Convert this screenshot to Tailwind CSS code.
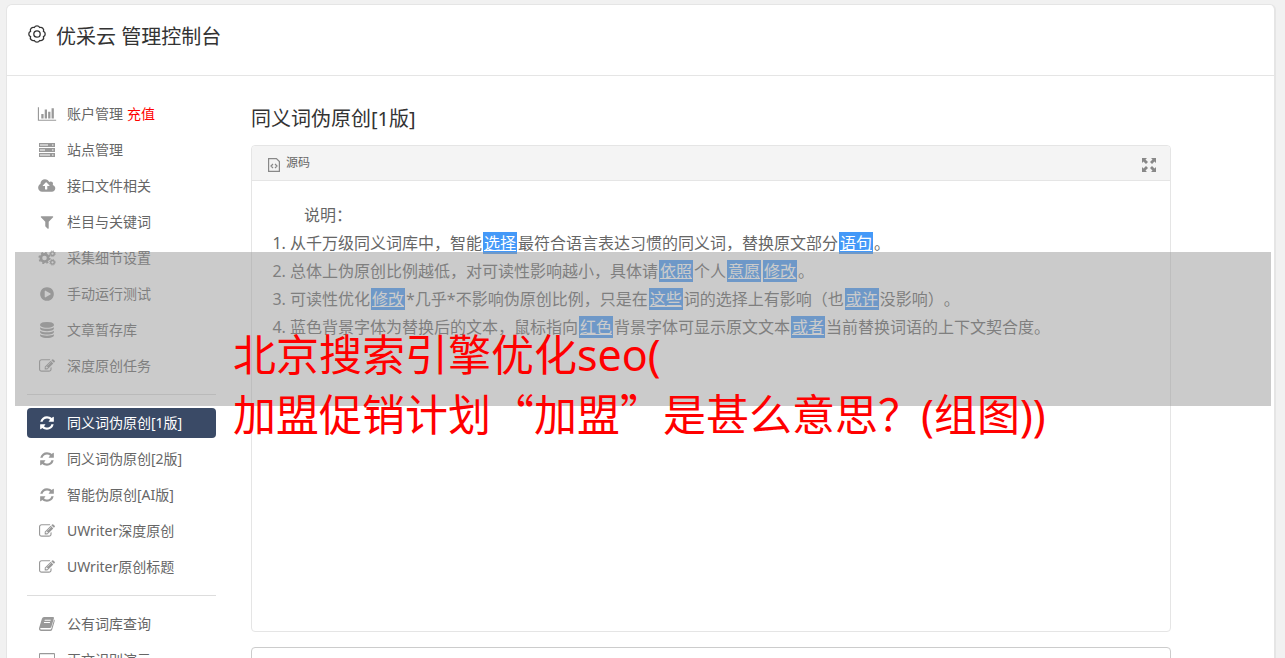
<!DOCTYPE html>
<html lang="zh-CN">
<head>
  <meta charset="UTF-8" />
  <meta name="viewport" content="width=device-width, initial-scale=1.0" />
  <title>优采云 管理控制台</title>
  <script src="https://cdn.jsdelivr.net/npm/@tailwindcss/browser@4"></script>
</head>
<body class="relative bg-[#f1f1f1] pt-1 pr-[9px] pl-[6px] font-['Noto_Sans','Noto_Sans_CJK_SC',sans-serif] text-[#666] [text-spacing-trim:space-all]">

  <!-- icon set -->
  <svg class="hidden">
    <symbol id="i-chart" viewBox="0 0 2048 1792"><path d="M640 896v512h-256v-512h256zm384-512v1024h-256v-1024h256zm1024 1152v128h-2048v-1536h128v1408h1920zm-640-896v768h-256v-768h256zm384-384v1152h-256v-1152h256z"/></symbol>
    <symbol id="i-server" viewBox="0 0 18 16"><path fill-rule="evenodd" d="M1 1h16v4H1zM2 2.500h8v1H2zM14 2.500h1.500v1H14zM1 6h16v4H1zM2 7.500h5v1H2zM14 7.500h1.500v1H14zM1 11h16v4H1zM2 12.500h10v1H2zM14 12.500h1.500v1H14z"/></symbol>
    <symbol id="i-upload" viewBox="0 0 1920 1792"><path d="M1216 864q0-14-9-23l-352-352q-9-9-23-9t-23 9l-351 351q-10 12-10 24 0 14 9 23t23 9h224v352q0 13 9.500 22.500t22.500 9.500h192q13 0 22.500-9.500t9.500-22.500v-352h224q13 0 22.500-9.500t9.500-22.500zm640 288q0 159-112.500 271.500t-271.500 112.500h-1088q-185 0-316.500-131.500t-131.500-316.500q0-130 70-240t188-165q-2-30-2-43 0-212 150-362t362-150q156 0 285.500 87t188.500 231q71-62 166-62 106 0 181 75t75 181q0 76-41 138 130 31 213.500 135.500t83.500 238.500z" transform="translate(32 0)"/></symbol>
    <symbol id="i-filter" viewBox="0 0 1792 1792"><path d="M1595 295q17 41-14 70l-493 493v742q0 42-39 59-13 5-25 5-27 0-45-19l-256-256q-19-19-19-45v-486l-493-493q-31-29-14-70 17-39 59-39h1280q42 0 59 39z"/></symbol>
    <symbol id="i-cogs" viewBox="0 0 18 16">
      <g fill="none" stroke="currentColor">
        <circle cx="6.500" cy="8" r="3.600" stroke-width="2.600"/>
        <circle cx="6.500" cy="8" r="5.300" stroke-width="1.600" stroke-dasharray="2.080 2.080"/>
        <circle cx="14.500" cy="3.700" r="1.800" stroke-width="1.400"/>
        <circle cx="14.500" cy="3.700" r="2.800" stroke-width="1" stroke-dasharray="1.100 1.100"/>
        <circle cx="14.500" cy="12.300" r="1.800" stroke-width="1.400"/>
        <circle cx="14.500" cy="12.300" r="2.800" stroke-width="1" stroke-dasharray="1.100 1.100"/>
      </g>
    </symbol>
    <symbol id="i-play" viewBox="0 0 1792 1792"><path d="M896 128q209 0 385.500 103t279.500 279.500 103 385.500-103 385.500-279.500 279.500-385.500 103-385.500-103-279.500-279.500-103-385.500 103-385.500 279.500-279.500 385.500-103zm384 823q32-18 32-55t-32-55l-544-320q-31-19-64-1-32 19-32 56v640q0 37 32 56 16 8 32 8 17 0 32-9z"/></symbol>
    <symbol id="i-database" viewBox="0 0 1792 1792"><path d="M896 768q237 0 443-43t325-127v170q0 69-103 128t-280 93.500-385 34.500-385-34.500-280-93.500-103-128v-170q119 84 325 127t443 43zm0 768q237 0 443-43t325-127v170q0 69-103 128t-280 93.500-385 34.500-385-34.500-280-93.500-103-128v-170q119 84 325 127t443 43zm0-384q237 0 443-43t325-127v170q0 69-103 128t-280 93.500-385 34.500-385-34.500-280-93.500-103-128v-170q119 84 325 127t443 43zm0-1152q208 0 385 34.500t280 93.500 103 128v128q0 69-103 128t-280 93.500-385 34.500-385-34.500-280-93.500-103-128v-128q0-69 103-128t280-93.500 385-34.500z"/></symbol>
    <symbol id="i-edit" viewBox="0 0 1792 1792"><path d="M888 1184l116-116-152-152-116 116v56h96v96h56zm440-720q-16-16-33 1l-350 350q-17 17-1 33t33-1l350-350q17-17 1-33zm80 594v190q0 119-84.500 203.500t-203.500 84.500h-832q-119 0-203.500-84.500t-84.500-203.500v-832q0-119 84.500-203.500t203.500-84.500h832q63 0 117 25 15 7 18 23 3 17-9 29l-49 49q-14 14-32 8-23-6-45-6h-832q-66 0-113 47t-47 113v832q0 66 47 113t113 47h832q66 0 113-47t47-113v-126q0-13 9-22l64-64q15-15 35-7t20 29zm-96-738l288 288-672 672h-288v-288zm444 132l-92 92-288-288 92-92q28-28 68-28t68 28l152 152q28 28 28 68t-28 68z"/></symbol>
    <symbol id="i-refresh" viewBox="0 0 1792 1792"><path d="M1639 1056q0 5-1 7-64 268-268 434.500t-478 166.500q-146 0-282.500-55t-243.500-157l-129 129q-19 19-45 19t-45-19-19-45v-448q0-26 19-45t45-19h448q26 0 45 19t19 45-19 45l-137 137q71 66 161 102t187 36q134 0 250-65t186-179q11-17 53-117 8-23 30-23h192q13 0 22.500 9.500t9.500 22.500zm25-800v448q0 26-19 45t-45 19h-448q-26 0-45-19t-19-45 19-45l138-138q-148-137-349-137-134 0-250 65t-186 179q-11 17-53 117-8 23-30 23h-199q-13 0-22.500-9.500t-9.500-22.500v-7q65-268 270-434.500t480-166.500q146 0 284 55.500t245 156.500l130-129q19-19 45-19t45 19 19 45z"/></symbol>
    <symbol id="i-book" viewBox="0 0 18 16"><path fill-rule="evenodd" d="M6 1h9q1.300 0 .9 1.400l-2.500 8.400q-.4 1.200-1.600 1.200H3q-.9 0-.9.700 0 .8 1.200.8h8.900q.9 0 1.200-.9l2.700-9q.9.500.6 1.500l-2.500 8.400q-.5 1.500-2 1.500H3.300Q.8 15 1 12.300L3.900 2.700Q4.500 1 6 1zM6.800 3.800l-.3.900h6l.3-.9zM6.100 6.100l-.3.900h6l.3-.9z"/></symbol>
    <symbol id="i-screen" viewBox="0 0 18 16"><path fill-rule="evenodd" d="M2 1h14q1 0 1 1v9q0 1-1 1h-5v2h2v1H5v-1h2v-2H2q-1 0-1-1V2q0-1 1-1zm0 1.300v7.500h14V2.300z"/></symbol>
  </svg>

  <div class="min-h-screen rounded-t-md border-t border-r-2 border-l border-[#e5e5e5] bg-white">
    <header class="flex h-[71px] items-start gap-[9px] border-b border-[#e5e5e5] pt-[15px] pl-5 text-[#333]">
      <svg class="mt-1 size-5" viewBox="0 0 20 20" fill="none" stroke="currentColor" stroke-width="1.300"><path d="M16.500 7.300a3 3 0 0 1 0 5.400a3 3 0 0 1-3.800 3.800a3 3 0 0 1-5.400 0a3 3 0 0 1-3.800-3.800a3 3 0 0 1 0-5.400a3 3 0 0 1 3.800-3.800a3 3 0 0 1 5.400 0a3 3 0 0 1 3.800 3.800z"/><circle cx="10" cy="10" r="3.200"/></svg>
      <h1 class="pt-px text-xl/[32px]">优采云 管理控制台</h1>
    </header>

    <div class="flex gap-[35px] pt-[23px] pr-[103px] pl-5">
      <!-- sidebar -->
      <nav class="w-[189px] shrink-0 text-sm">
        <ul class="flex flex-col gap-[6px]">
          <li class="flex h-[30px] items-center gap-1 pl-[10px]"><a href="#" class="flex items-center gap-[10px]"><svg class="h-4 w-5 fill-[#999]"><use href="#i-chart"/></svg>账户管理</a><a href="#" class="text-[#f00]">充值</a></li>
          <li><a href="#" class="flex h-[30px] items-center gap-[10px] pl-[10px]"><svg class="h-4 w-5 fill-[#999]"><use href="#i-server"/></svg>站点管理</a></li>
          <li><a href="#" class="flex h-[30px] items-center gap-[10px] pl-[10px]"><svg class="h-4 w-5 fill-[#999]"><use href="#i-upload"/></svg>接口文件相关</a></li>
          <li><a href="#" class="flex h-[30px] items-center gap-[10px] pl-[10px]"><svg class="h-4 w-5 fill-[#999]"><use href="#i-filter"/></svg>栏目与关键词</a></li>
          <li><a href="#" class="flex h-[30px] items-center gap-[10px] pl-[10px]"><svg class="h-4 w-5 text-[#999]"><use href="#i-cogs"/></svg>采集细节设置</a></li>
          <li><a href="#" class="flex h-[30px] items-center gap-[10px] pl-[10px]"><svg class="h-4 w-5 fill-[#999]"><use href="#i-play"/></svg>手动运行测试</a></li>
          <li><a href="#" class="flex h-[30px] items-center gap-[10px] pl-[10px]"><svg class="h-4 w-5 fill-[#999]"><use href="#i-database"/></svg>文章暂存库</a></li>
          <li><a href="#" class="flex h-[30px] items-center gap-[10px] pl-[10px]"><svg class="h-4 w-5 fill-[#999]"><use href="#i-edit"/></svg>深度原创任务</a></li>
        </ul>
        <hr class="my-[13px] border-[#ddd]" />
        <ul class="flex flex-col gap-[6px]">
          <li><a href="#" class="flex h-[30px] items-center gap-[10px] rounded-sm bg-[#3a4a66] pl-[10px] text-white"><svg class="h-4 w-5 fill-white"><use href="#i-refresh"/></svg>同义词伪原创[1版]</a></li>
          <li><a href="#" class="flex h-[30px] items-center gap-[10px] pl-[10px]"><svg class="h-4 w-5 fill-[#999]"><use href="#i-refresh"/></svg>同义词伪原创[2版]</a></li>
          <li><a href="#" class="flex h-[30px] items-center gap-[10px] pl-[10px]"><svg class="h-4 w-5 fill-[#999]"><use href="#i-refresh"/></svg>智能伪原创[AI版]</a></li>
          <li><a href="#" class="flex h-[30px] items-center gap-[10px] pl-[10px]"><svg class="h-4 w-5 fill-[#999]"><use href="#i-edit"/></svg>UWriter深度原创</a></li>
          <li><a href="#" class="flex h-[30px] items-center gap-[10px] pl-[10px]"><svg class="h-4 w-5 fill-[#999]"><use href="#i-edit"/></svg>UWriter原创标题</a></li>
        </ul>
        <hr class="my-[13px] border-[#ddd]" />
        <ul class="flex flex-col gap-[6px]">
          <li><a href="#" class="flex h-[30px] items-center gap-[10px] pl-[10px]"><svg class="h-4 w-5 fill-[#999]"><use href="#i-book"/></svg>公有词库查询</a></li>
          <li><a href="#" class="flex h-[30px] items-center gap-[10px] pl-[10px]"><svg class="h-4 w-5 fill-[#999]"><use href="#i-screen"/></svg>正文识别演示</a></li>
        </ul>
      </nav>

      <!-- editor -->
      <main class="min-w-0 flex-1">
        <h2 class="mt-1 mb-[10px] text-xl/[32px] text-[#333]">同义词伪原创[1版]</h2>
        <section class="rounded border border-[#e5e5e5]">
          <div class="flex h-[35px] items-center justify-between rounded-t border-b border-[#e5e5e5] bg-[#f4f4f4] px-[14px]">
            <button type="button" class="flex items-center gap-1 text-xs">
              <svg class="mt-1 size-4" viewBox="0 0 16 16" fill="none" stroke="#888" stroke-width="1.200"><path d="M2.600 1.600h7.800l3 3v9.800H2.600zM7 7L5 9l2 2M9 7l2 2-2 2"/></svg>
              源码
            </button>
            <button type="button" aria-label="全屏">
              <svg class="mt-1 size-[14px]" viewBox="0 0 14 14" fill="#888"><path d="M0 0h5L3.500 1.500l2.500 2.500-2 2L1.500 3.500 0 5zM14 0v5l-1.500-1.500L10 6 8 4l2.500-2.500L9 0zM0 14V9l1.500 1.500L4 8l2 2-2.500 2.500L5 14zM14 14H9l1.500-1.500L8 10l2-2 2.500 2.500L14 9z"/></svg>
            </button>
          </div>
          <div class="min-h-[450px] px-5 py-5 text-base/7">
            <p class="pl-8">说明：</p>
            <ol class="list-decimal pl-[18px]">
              <li>从千万级同义词库中，智能<a href="#" class="mx-px bg-[#4499f8] px-px text-white underline">选择</a>最符合语言表达习惯的同义词，替换原文部分<a href="#" class="mx-px bg-[#4499f8] px-px text-white underline">语句</a>。</li>
              <li>总体上伪原创比例越低，对可读性影响越小，具体请<a href="#" class="mx-px bg-[#4499f8] px-px text-white underline">依照</a>个人<a href="#" class="mx-px bg-[#4499f8] px-px text-white underline">意愿</a><a href="#" class="mx-px bg-[#4499f8] px-px text-white underline">修改</a>。</li>
              <li>可读性优化<a href="#" class="mx-px bg-[#4499f8] px-px text-white underline">修改</a>*几乎*不影响伪原创比例，只是在<a href="#" class="mx-px bg-[#4499f8] px-px text-white underline">这些</a>词的选择上有影响（也<a href="#" class="mx-px bg-[#4499f8] px-px text-white underline">或许</a>没影响）。</li>
              <li>蓝色背景字体为替换后的文本，鼠标指向<a href="#" class="mx-px bg-[#4499f8] px-px text-white underline">红色</a>背景字体可显示原文文本<a href="#" class="mx-px bg-[#4499f8] px-px text-white underline">或者</a>当前替换词语的上下文契合度。</li>
            </ol>
          </div>
        </section>
        <textarea aria-label="原文" class="mt-[15px] block h-40 w-full resize-none rounded border border-[#ccc]"></textarea>
      </main>
    </div>
  </div>

  <!-- caption band over the page -->
  <div class="absolute top-[252px] right-[14px] left-[15px] h-[154px] bg-[#979797]/50"></div>
  <p class="absolute top-[325px] left-[233px] text-[43px]/[60px] whitespace-nowrap text-[#f00]">北京搜索引擎优化seo(<br />加盟促销计划<span class="font-['Noto_Sans_CJK_SC',sans-serif] leading-none">“</span>加盟<span class="font-['Noto_Sans_CJK_SC',sans-serif] leading-none">”</span>是甚么意思？(组图))</p>

</body>
</html>
